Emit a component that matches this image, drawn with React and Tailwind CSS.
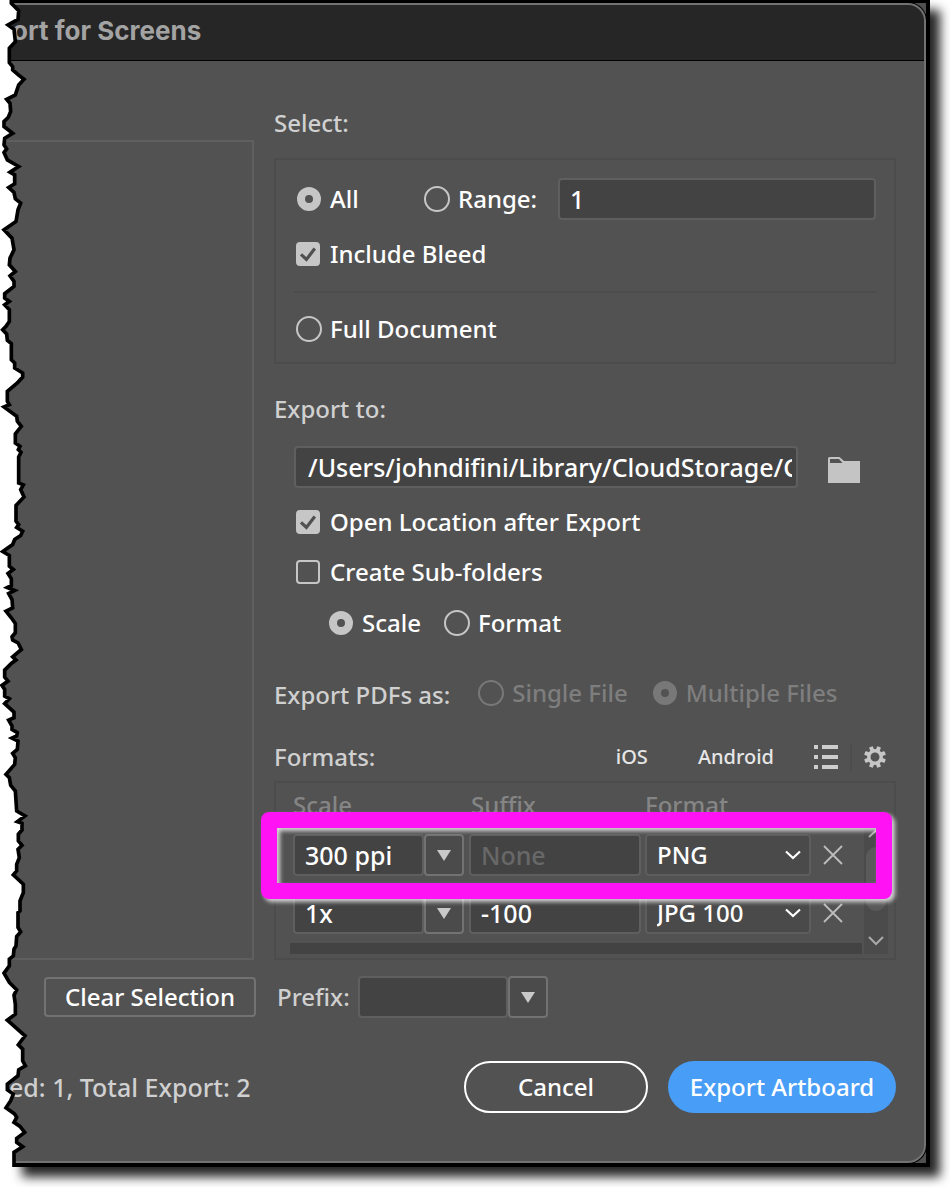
import React from "react";

const TEAR =
  "34,-6 34,10 56,32 54,58 24,75 42,88 46,125 28,145 28,188 38,200 38,210 55,225 72,238 56,255 46,285 20,298 30,310 32,335 25,352 12,365 12,380 38,400 14,415 12,435 20,447 12,458 22,480 56,500 30,517 44,525 44,552 26,563 42,578 46,597 62,610 54,630 48,665 12,690 36,715 42,750 30,775 28,795 46,815 30,828 42,845 42,860 14,882 14,895 28,905 14,915 28,930 28,965 18,980 8,990 20,1003 22,1022 34,1032 34,1080 44,1090 44,1105 68,1120 68,1132 52,1150 22,1175 22,1205 28,1215 12,1222 50,1250 52,1265 64,1280 46,1303 46,1330 60,1340 55,1350 63,1358 56,1372 56,1450 70,1456 62,1470 72,1492 48,1518 48,1565 56,1575 50,1584 68,1595 62,1608 44,1620 38,1635 8,1656 28,1668 28,1700 40,1710 24,1722 34,1738 34,1758 22,1764 44,1773 26,1782 36,1800 38,1825 18,1835 34,1855 46,1872 46,1900 36,1912 38,1922 54,1930 64,1950 38,1972 48,1982 34,1992 14,2012 14,2033 24,2045 6,2058 14,2070 14,2090 28,2098 14,2113 42,2138 42,2155 26,2162 36,2180 36,2190 52,2200 50,2210 36,2216 54,2225 52,2250 38,2262 46,2275 44,2295 18,2325 28,2335 32,2358 46,2375 50,2435 75,2450 52,2467 66,2472 66,2492 55,2505 55,2525 66,2538 54,2550 58,2575 50,2595 50,2615 40,2627 70,2655 70,2680 60,2705 60,2735 54,2740 54,2785 62,2798 50,2812 48,2840 42,2850 40,2870 28,2880 28,2900 12,2922 28,2950 50,2972 42,2988 46,3015 46,3045 22,3063 75,3110 55,3137 68,3150 68,3185 76,3200 56,3212 54,3230 22,3255 22,3272 40,3285 32,3305 18,3326 44,3345 50,3355 42,3370 60,3382 74,3400 50,3418 50,3430 68,3443 42,3460 42,3504";

function TornEdge() {
  return (
    <svg
      className="pointer-events-none absolute inset-y-0 left-0 h-full w-[30px]"
      viewBox="0 0 90 3504"
      preserveAspectRatio="none"
      aria-hidden="true"
    >
      <polygon points={`-20,-20 ${TEAR} 42,3520 -20,3520`} fill="#fff" />
      <polyline points={TEAR} fill="none" stroke="#000" strokeWidth="11" />
    </svg>
  );
}

function Radio({ label, name, checked, disabled }) {
  return (
    <label className={`flex items-center gap-2 whitespace-nowrap ${disabled ? "text-[#7e7e7e]" : "text-white"}`}>
      <input
        type="radio"
        name={name}
        defaultChecked={checked}
        disabled={disabled}
        className="size-[26px] shrink-0 appearance-none rounded-full border-2 border-[#c6c6c6] checked:m-px checked:size-6 checked:border-8 disabled:border-[#787878]"
      />
      {label}
    </label>
  );
}

function Checkbox({ label, checked }) {
  return (
    <label className="flex items-center gap-2.5 text-white">
      <span className="grid size-6 shrink-0 place-items-center">
        <input
          type="checkbox"
          defaultChecked={checked}
          className="peer col-start-1 row-start-1 size-6 appearance-none rounded-[4px] border-2 border-[#c6c6c6] checked:bg-[#c6c6c6]"
        />
        <svg
          className="pointer-events-none invisible col-start-1 row-start-1 size-6 peer-checked:visible"
          viewBox="0 0 24 24"
          fill="none"
          stroke="#505050"
          strokeWidth="3.2"
          aria-hidden="true"
        >
          <path d="M5 12.4 10.4 17.4 18.8 6.6" />
        </svg>
      </span>
      {label}
    </label>
  );
}

function DropButton({ label }) {
  return (
    <button
      type="button"
      aria-label={label}
      className="flex h-[42px] w-10 shrink-0 items-center justify-center rounded-[4px] border-2 border-[#727272] bg-[#4b4b4b]"
    >
      <svg className="h-3 w-4" viewBox="0 0 16 12" aria-hidden="true">
        <path d="M1 1h14L8 12z" fill="#c9c9c9" />
      </svg>
    </button>
  );
}

const field =
  "h-[42px] min-w-0 rounded-[4px] border-2 border-[#5f5f5f] bg-[#434343] pr-1 text-[25px] text-white outline-none placeholder:text-[#686868]";

function FormatRow({ scale, suffix, format }) {
  return (
    <tr className="h-[58px]">
      <td className="p-0">
        <div className="flex pr-[5px]">
          <input aria-label="Scale" defaultValue={scale} className={`${field} flex-1 pl-2.5`} />
          <DropButton label="Scale presets" />
        </div>
      </td>
      <td className="p-0">
        <div className="flex pr-1">
          <input aria-label="Suffix" placeholder="None" defaultValue={suffix} className={`${field} flex-1 pl-2.5`} />
        </div>
      </td>
      <td className="p-0">
        <div className="grid items-center">
          <select
            aria-label="Format"
            defaultValue={format}
            className="col-start-1 row-start-1 h-[42px] w-full appearance-none rounded-[4px] border-2 border-[#5d5d5d] bg-[#4a4a4a] pl-2.5 text-white outline-none"
          >
            <option>PNG</option>
            <option>JPG 100</option>
          </select>
          <svg
            className="pointer-events-none col-start-1 row-start-1 mr-2.5 h-3 w-4 justify-self-end"
            viewBox="0 0 16 12"
            fill="none"
            stroke="#fff"
            strokeWidth="2.2"
            aria-hidden="true"
          >
            <path d="M1 2.5 8 9l7-6.500" />
          </svg>
        </div>
      </td>
      <td className="p-0 pl-3">
        <button type="button" aria-label={`Remove ${scale}`} className="block">
          <svg className="size-5" viewBox="0 0 20 20" fill="none" stroke="#bdbdbd" strokeWidth="1.8" aria-hidden="true">
            <path d="M1 1l18 18M19 1 1 19" />
          </svg>
        </button>
      </td>
    </tr>
  );
}

function GearIcon() {
  return (
    <svg className="size-[22px]" viewBox="0 0 22 22" aria-hidden="true">
      <circle cx="11" cy="11" r="6.200" fill="none" stroke="#c6c6c6" strokeWidth="3.400" />
      {[22.5, 67.5, 112.5, 157.5, 202.5, 247.5, 292.5, 337.5].map((angle) => (
        <rect key={angle} x="9" y="0" width="4" height="4.500" rx="0.8" fill="#c6c6c6" transform={`rotate(${angle} 11 11)`} />
      ))}
    </svg>
  );
}

function SelectSection() {
  return (
    <section>
      <h2>Select:</h2>
      <div className="mt-[18px] border-2 border-[#4c4c4c] px-[18px] pt-[18px] pb-4">
        <div className="flex items-center pl-0.5">
          <div className="w-32 shrink-0">
            <Radio name="range" label="All" checked />
          </div>
          <div className="w-[134px] shrink-0">
            <Radio name="range" label="Range:" />
          </div>
          <input aria-label="Range" defaultValue="1" className={`${field} flex-1 pl-2.5`} />
        </div>
        <div className="mt-[17px] pl-0.5">
          <Checkbox label="Include Bleed" checked />
        </div>
        <hr className="mt-5 border-t-2 border-[#4c4c4c]" />
        <div className="mt-[19px] pl-0.5">
          <Radio name="range" label="Full Document" />
        </div>
      </div>
    </section>
  );
}

function ExportSection() {
  return (
    <section className="mt-7">
      <h2>Export to:</h2>
      <div className="mt-5 flex items-center pr-9 pl-5">
        <input
          aria-label="Export path"
          defaultValue="/Users/johndifini/Library/CloudStorage/C"
          className={`${field} flex-1 pl-3`}
        />
        <button type="button" aria-label="Choose folder" className="ml-[30px] pt-1.5">
          <svg className="h-[26px] w-8" viewBox="0 0 32 26" aria-hidden="true">
            <path d="M0 26V1.500Q0 0 1.500 0H11.500L16 4H32V26ZM2 2V6H14.500L11 2Z" fillRule="evenodd" fill="#c4c4c4" />
          </svg>
        </button>
      </div>
      <div className="mt-[17px] flex flex-col gap-4 pl-[22px]">
        <Checkbox label="Open Location after Export" checked />
        <Checkbox label="Create Sub-folders" />
        <div className="flex gap-[23px] pt-px pl-8">
          <Radio name="group" label="Scale" checked />
          <Radio name="group" label="Format" />
        </div>
      </div>
    </section>
  );
}

function FormatsSection() {
  return (
    <section className="mt-7">
      <div className="flex items-center">
        <h2 className="flex-1">Formats:</h2>
        <button type="button" className="mr-[50px] text-xl text-[#e6e6e6]">iOS</button>
        <button type="button" className="mr-10 text-xl text-[#e6e6e6]">Android</button>
        <button type="button" aria-label="List settings">
          <svg className="size-6" viewBox="0 0 24 24" fill="#cdcdcd" aria-hidden="true">
            <path d="M0 0h4v4H0zM8 0h16v4H8zM0 10h4v4H0zM8 10h16v4H8zM0 20h4v4H0zM8 20h16v4H8z" />
          </svg>
        </button>
        <div className="mx-3 h-7 w-0.5 bg-[#4d4d4d]" />
        <button type="button" aria-label="Advanced settings" className="mr-2.5">
          <GearIcon />
        </button>
      </div>
      <div className="relative mt-[7px] border-2 border-[#4c4c4c] pb-1">
        <div className="flex">
          <div className="flex-1">
            <div className="pl-[17px]">
              <table className="w-full table-fixed border-collapse">
                <colgroup>
                  <col className="w-44" />
                  <col className="w-44" />
                  <col className="w-[166px]" />
                  <col />
                </colgroup>
                <thead>
                  <tr className="h-[43px] text-left text-[#858585]">
                    <th className="p-0 font-medium">Scale</th>
                    <th className="p-0 pl-0.5 font-medium">Suffix</th>
                    <th className="p-0 font-medium">Format</th>
                    <th className="p-0" aria-label="Remove" />
                  </tr>
                </thead>
                <tbody>
                  <FormatRow scale="300 ppi" format="PNG" />
                  <FormatRow scale="1x" suffix="-100" format="JPG 100" />
                </tbody>
              </table>
            </div>
            <div className="mt-px ml-3.5 h-[11px] bg-[#434343]" />
          </div>
          <div className="mr-1.5 ml-0.5 mt-11 flex w-6 flex-col items-center bg-[#4b4b4b] pb-2">
            <svg className="h-4 w-4 shrink-0" viewBox="0 0 16 16" fill="none" stroke="#aaa" strokeWidth="2" aria-hidden="true">
              <path d="M1 10 8 3.500l7 6.500" />
            </svg>
            <div className="mt-1 h-16 w-5 rounded-full bg-[#5a5a5a]" />
            <div className="flex-1" />
            <svg className="h-2.5 w-4 shrink-0" viewBox="0 0 16 10" fill="none" stroke="#aaa" strokeWidth="2" aria-hidden="true">
              <path d="M1 1 8 8l7-7" />
            </svg>
          </div>
        </div>
        <div className="pointer-events-none absolute top-[29px] right-0.5 -left-[15px] h-[87px] rounded-lg border-16 border-[#ff12f4] drop-shadow-[3px_3px_2px_rgba(255,255,255,0.75)]" />
      </div>
    </section>
  );
}

export default function App() {
  return (
    <div className="bg-white pr-5 pb-5 font-['Noto_Sans',sans-serif] text-2xl leading-[34px] font-medium text-[#d0d0d0]">
      <div className="relative">
        <div className="absolute inset-y-0 right-0 left-3 shadow-[10px_10px_10px_rgba(0,0,0,0.85)]" />
        <main className="relative overflow-hidden border-t-3 border-r-4 border-b-4 border-black bg-[#505050]">
          <div className="overflow-hidden rounded-r-[18px] border-t-2 border-r-2 border-b-2 border-[#727272] bg-[#525252] shadow-[0_0_0_1px_#000]">
            <header className="flex h-14 items-center border-b border-black bg-[#262626] pb-1 pl-3">
              <h1 className="font-[Inter,sans-serif] text-[26px] font-bold text-[#a3a3a3]">ort for Screens</h1>
            </header>

            <div className="flex pr-7">
              <div className="mt-[79px] w-[254px] shrink-0 border-t-2 border-r-2 border-b-2 border-[#5f5f5f]" />
              <div className="ml-5 min-w-0 flex-1 pt-[45px]">
                <SelectSection />
                <ExportSection />
                <fieldset className="mt-[34px] flex items-center">
                  <span className="mr-7 pt-1">Export PDFs as:</span>
                  <div className="flex gap-6">
                    <Radio name="pdf" label="Single File" disabled />
                    <Radio name="pdf" label="Multiple Files" checked disabled />
                  </div>
                </fieldset>
                <FormatsSection />
              </div>
            </div>

            <div className="mt-4 flex items-center pl-11">
              <button type="button" className="h-10 w-[212px] rounded-[4px] border-2 border-[#727272] leading-8 text-white">
                Clear Selection
              </button>
              <label className="ml-[21px] flex items-center gap-2">
                Prefix:
                <input className={`${field} w-[150px] pl-2.5`} />
              </label>
              <DropButton label="Prefix presets" />
            </div>

            <footer className="mt-[43px] flex items-center gap-5 pr-7 pb-12 pl-[9px]">
              <p className="flex-1 text-[25px]">ed: 1, Total Export: 2</p>
              <button type="button" className="h-[52px] w-[184px] rounded-full border-2 border-white text-white">
                Cancel
              </button>
              <button type="button" className="h-[52px] w-[228px] rounded-full bg-[#489df6] text-white">
                Export Artboard
              </button>
            </footer>
          </div>
        </main>
        <TornEdge />
      </div>
    </div>
  );
}
